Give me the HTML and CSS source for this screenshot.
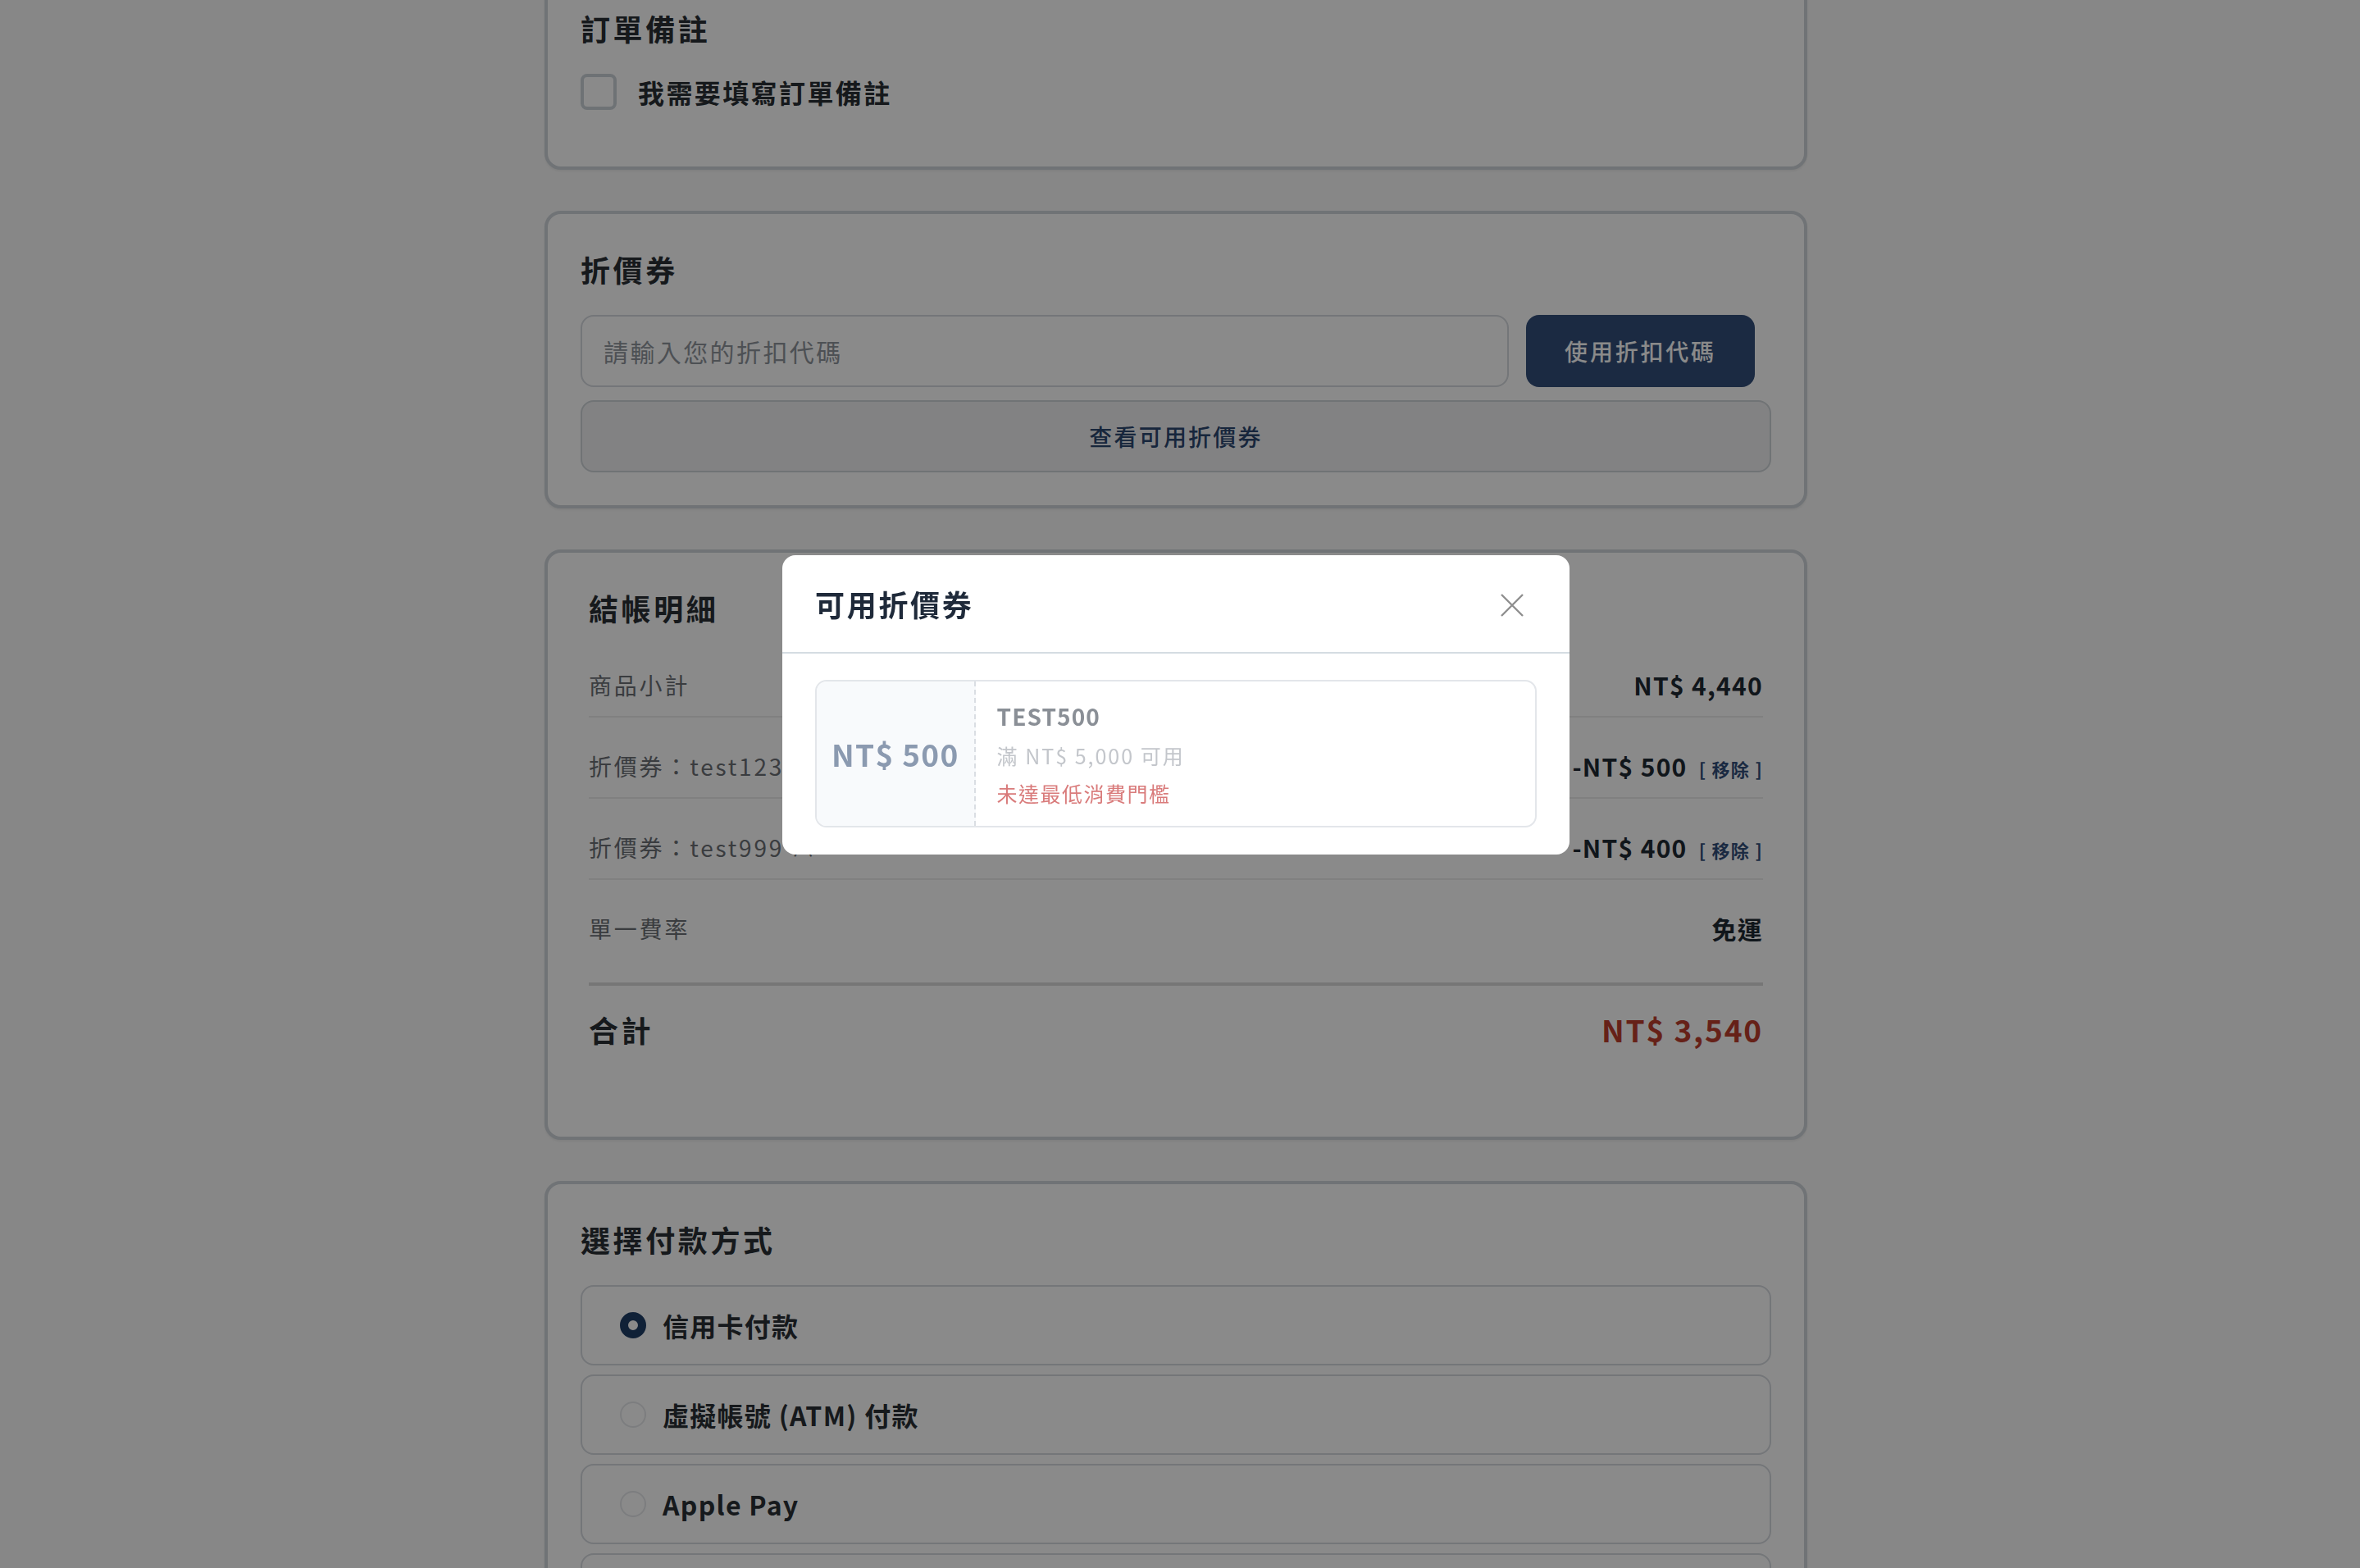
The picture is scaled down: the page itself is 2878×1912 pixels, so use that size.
FILE: index.html
```html
<!DOCTYPE html>
<html lang="zh-Hant">
<head>
    <meta charset="UTF-8">
    <meta name="viewport" content="width=device-width, initial-scale=1.0">
    <title>結帳</title>
    <link rel="stylesheet" href="styles.css">
</head>
<body>
    <main class="checkout">
        <!-- 訂單備註 -->
        <section class="card">
            <h2 class="card-title">訂單備註</h2>
            <label class="check-row">
                <span class="checkbox"></span>
                <span>我需要填寫訂單備註</span>
            </label>
        </section>

        <!-- 折價券 -->
        <section class="card">
            <h2 class="card-title">折價券</h2>
            <div class="coupon-row">
                <input class="coupon-input" type="text" placeholder="請輸入您的折扣代碼">
                <button class="btn-primary">使用折扣代碼</button>
            </div>
            <button class="btn-outline">查看可用折價券</button>
        </section>

        <!-- 結帳明細 -->
        <section class="card card-summary">
            <h2 class="card-title">結帳明細</h2>
            <div class="sum-list">
                <div class="sum-row">
                    <span class="sum-label">商品小計</span>
                    <span class="sum-value">NT$ 4,440</span>
                </div>
                <div class="sum-row">
                    <span class="sum-label">折價券：test123</span>
                    <span class="sum-value">-NT$ 500 <a class="remove-link">[ 移除 ]</a></span>
                </div>
                <div class="sum-row">
                    <span class="sum-label">折價券：test999 <span class="sum-note">∧</span></span>
                    <span class="sum-value">-NT$ 400 <a class="remove-link">[ 移除 ]</a></span>
                </div>
                <div class="sum-row">
                    <span class="sum-label">單一費率</span>
                    <span class="sum-value">免運</span>
                </div>
            </div>
            <div class="sum-total">
                <span>合計</span>
                <span class="total-value">NT$ 3,540</span>
            </div>
        </section>

        <!-- 付款方式 -->
        <section class="card">
            <h2 class="card-title">選擇付款方式</h2>
            <div class="pay-list">
                <label class="pay-option">
                    <span class="radio checked"></span>
                    <span>信用卡付款</span>
                </label>
                <label class="pay-option">
                    <span class="radio"></span>
                    <span>虛擬帳號 (ATM) 付款</span>
                </label>
                <label class="pay-option">
                    <span class="radio"></span>
                    <span>Apple Pay</span>
                </label>
                <label class="pay-option">
                    <span class="radio"></span>
                </label>
            </div>
        </section>
    </main>

    <!-- 可用折價券 modal -->
    <div class="modal">
        <div class="modal-content">
            <div class="modal-header">
                <h3>可用折價券</h3>
                <button class="close-btn" aria-label="關閉">
                    <svg width="28" height="28" viewBox="0 0 28 28">
                        <path d="M1 1 L27 27 M27 1 L1 27" stroke="#8e8e8e" stroke-width="2.4" fill="none"/>
                    </svg>
                </button>
            </div>
            <div class="modal-body">
                <div class="coupon-card">
                    <div class="coupon-amount">NT$ 500</div>
                    <div class="coupon-info">
                        <div class="coupon-code">TEST500</div>
                        <div class="coupon-min">滿 NT$ 5,000 可用</div>
                        <div class="coupon-warn">未達最低消費門檻</div>
                    </div>
                </div>
            </div>
        </div>
    </div>
</body>
</html>
```

FILE: styles.css
```css
html, body {
    overflow: hidden;
}

body {
    margin: 0;
    padding: 0 10px 0 0;
    background-color: #fafafa;
    font-family: "Noto Sans CJK TC", "Noto Sans", sans-serif;
    color: #1f2933;
    letter-spacing: 0.08em;
}

.checkout {
    width: 1540px;
    margin: -37px auto 0;
}

.card {
    background-color: #fff;
    border: 4px solid #cfd5da;
    border-radius: 20px;
    padding: 40px;
    margin-bottom: 50px;
    box-shadow: 0 2px 3px rgba(0, 0, 0, 0.06);
}

.card-title {
    margin: 0 0 29px;
    font-size: 36px;
    line-height: 54px;
    font-weight: 700;
    color: #2a2f35;
    letter-spacing: 0.1em;
}

/* 訂單備註 */
.check-row {
    display: flex;
    align-items: center;
    gap: 26px;
    height: 44px;
    margin-bottom: 29px;
    font-size: 32px;
    font-weight: 700;
    color: #2a2f35;
    letter-spacing: 0.075em;
}

.checkbox {
    width: 44px;
    height: 44px;
    box-sizing: border-box;
    border: 4px solid #ccd2d8;
    border-radius: 8px;
    background: #fff;
}

/* 折價券 */
.coupon-row {
    display: flex;
    gap: 21px;
    padding-right: 20px;
    margin-bottom: 16px;
}

.coupon-input {
    flex: 1;
    height: 88px;
    box-sizing: border-box;
    border: 2px solid #d6dadf;
    border-radius: 16px;
    padding: 0 26px;
    font-family: inherit;
    font-size: 30px;
    letter-spacing: 0.08em;
    color: #2a2f35;
    background: #fff;
}

.coupon-input::placeholder {
    color: #8f959c;
}

.btn-primary {
    width: 279px;
    height: 88px;
    border: none;
    border-radius: 16px;
    background-color: #324e7a;
    color: #fff;
    font-family: inherit;
    font-size: 28px;
    font-weight: 500;
    letter-spacing: 0.1em;
}

.btn-outline {
    display: block;
    width: 100%;
    height: 88px;
    border: 2px solid #cfd4d9;
    border-radius: 16px;
    background-color: #f0f1f2;
    color: #2c4670;
    font-family: inherit;
    font-size: 28px;
    font-weight: 500;
    letter-spacing: 0.08em;
}

/* 結帳明細 */
.card-summary {
    padding: 40px 50px;
}

.sum-row {
    display: flex;
    justify-content: space-between;
    align-items: center;
    height: 46px;
    padding: 15px 0;
    border-bottom: 2px solid #ececec;
}

.sum-row + .sum-row {
    margin-top: 21px;
}

.sum-row:last-child {
    border-bottom: none;
}

.sum-row > span {
    line-height: 1;
}

.sum-label {
    font-size: 28px;
    color: #6b6f75;
    letter-spacing: 0.1em;
}

.sum-note {
    color: #6b6f75;
}

.sum-value {
    font-size: 30px;
    font-weight: 700;
    color: #1f2933;
}

.remove-link {
    font-size: 22px;
    font-weight: 700;
    color: #324e7a;
    margin-left: 6px;
}

.sum-total {
    display: flex;
    justify-content: space-between;
    align-items: center;
    margin-top: 28px;
    border-top: 4px solid #dadada;
    padding: 26px 0 64px;
    line-height: 54px;
    font-size: 36px;
    font-weight: 700;
    color: #2a2f35;
    letter-spacing: 0.1em;
}

.total-value {
    font-size: 37px;
    color: #bd3d2e;
    letter-spacing: 0.05em;
}

/* 付款方式 */
.pay-list {
    display: flex;
    flex-direction: column;
    gap: 11px;
}

.pay-option {
    display: flex;
    align-items: center;
    gap: 20px;
    height: 98px;
    box-sizing: border-box;
    padding: 0 46px;
    border: 2px solid #d6dadf;
    border-radius: 16px;
    font-size: 32px;
    font-weight: 700;
    color: #2a2f35;
}

.radio {
    width: 32px;
    height: 32px;
    box-sizing: border-box;
    border: 2px solid #e6e8eb;
    border-radius: 50%;
    background: #fff;
}

.radio.checked {
    border: 10px solid #1f3d66;
}

/* modal */
.modal {
    position: fixed;
    top: 0;
    left: 0;
    right: 0;
    bottom: 0;
    background-color: rgba(0, 0, 0, 0.46);
    display: flex;
    justify-content: center;
    align-items: flex-start;
    padding: 677px 10px 0 0;
}

.modal-content {
    width: 960px;
    background-color: #fff;
    border-radius: 16px;
    overflow: hidden;
}

.modal-header {
    display: flex;
    justify-content: space-between;
    align-items: center;
    padding: 32px 40px;
    border-bottom: 2px solid #d5dce2;
}

.modal-header h3 {
    margin: 0;
    font-size: 36px;
    line-height: 54px;
    font-weight: 700;
    color: #1f2a3a;
    letter-spacing: 0.075em;
}

.close-btn {
    width: 60px;
    height: 54px;
    padding: 0;
    border: none;
    background: none;
    display: flex;
    justify-content: center;
    align-items: center;
    transform: translateY(2px);
}

.modal-body {
    padding: 32px 40px 33px;
}

.coupon-card {
    display: flex;
    height: 180px;
    box-sizing: border-box;
    border: 2px solid #e3e6ea;
    border-radius: 14px;
    overflow: hidden;
}

.coupon-amount {
    display: flex;
    align-items: center;
    padding: 0 18px;
    background-color: #f8fafc;
    border-right: 2px dashed #dadee3;
    font-size: 37px;
    font-weight: 700;
    color: #8b9ab0;
}

.coupon-info {
    display: flex;
    flex-direction: column;
    justify-content: center;
    padding: 0 26px;
}

.coupon-code {
    font-size: 28px;
    line-height: 42px;
    font-weight: 700;
    color: #8a8f96;
    margin-bottom: 8px;
    letter-spacing: 0.04em;
}

.coupon-min {
    font-size: 25px;
    line-height: 38px;
    color: #c3c6cb;
    margin-bottom: 8px;
    letter-spacing: 0.08em;
}

.coupon-warn {
    font-size: 25px;
    line-height: 38px;
    color: #d97b7b;
    letter-spacing: 0.06em;
}
```
